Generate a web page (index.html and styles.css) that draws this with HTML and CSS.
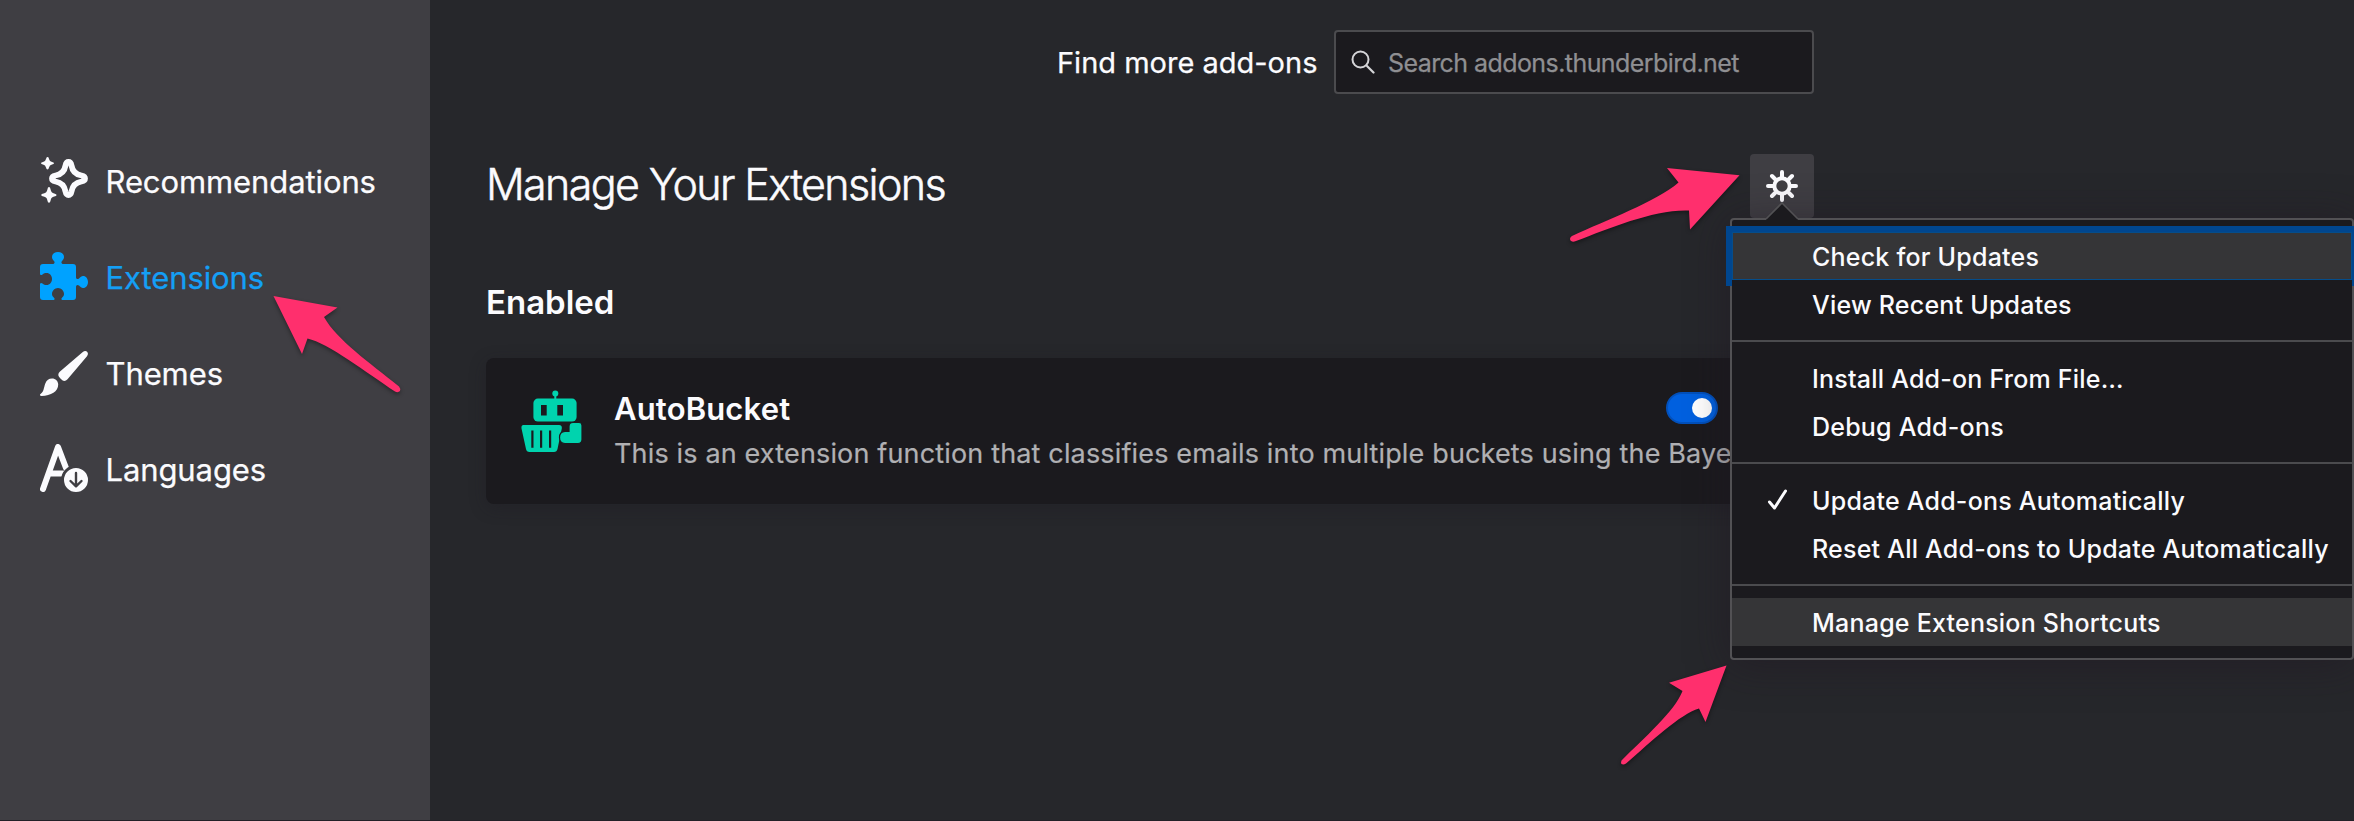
FILE: index.html
```html
<!DOCTYPE html>
<html lang="en">
<head>
<meta charset="utf-8">
<title>Add-ons Manager</title>
<link rel="stylesheet" href="styles.css">
</head>
<body>
<div class="app">
  <nav class="sidebar">
    <a class="category">
      <svg class="category-icon" viewBox="0 0 48 48"><path d="M28.5 6C26.8 6 26 7 25.5 9.500C24.500 15.500 21.500 18.500 15.500 19.500C13 20 12 20.800 12 22.500S13 25 15.500 25.500C21.500 26.500 24.500 29.500 25.500 35.500C26 38 26.800 39 28.500 39S31 38 31.500 35.500C32.500 29.500 35.500 26.500 41.500 25.500C44 25 45 24.200 45 22.500S44 20 41.500 19.500C35.500 18.500 32.500 15.500 31.500 9.500C31 7 30.200 6 28.500 6Z" fill="none" stroke="currentColor" stroke-width="5.800"/><path d="M7.500 1C8.300 1 8.700 1.500 9 3Q9.500 5.500 12 6Q14 6.400 14 7.300T12 8.600Q9.500 9.200 9 11.600Q8.600 13.600 7.500 13.600T6 11.600Q5.500 9.200 3 8.600Q1 8.200 1 7.300T3 6Q5.500 5.500 6 3Q6.400 1 7.500 1ZM9 31Q10.200 31 10.600 33.400Q11.200 36.800 14.200 37.400Q16.600 37.900 16.600 39T14.200 40.600Q11.200 41.200 10.600 44.400Q10.200 46.800 9 46.800T7.400 44.400Q6.800 41.200 3.600 40.600Q1.200 40.200 1.200 39T3.600 37.400Q6.800 36.800 7.400 33.400Q7.800 31 9 31Z" fill="currentColor"/></svg>
      <span class="category-name">Recommendations</span>
    </a>
    <a class="category selected">
      <svg class="category-icon" viewBox="0 0 48 48"><path fill="currentColor" d="M3 12H12.500C14.500 12 15.200 10.500 14 9C12.600 7.600 12 6.400 12 5C12 1.900 14.700 0 18 0S24 1.900 24 5C24 6.400 23.400 7.600 22 9C20.800 10.500 21.500 12 23.500 12H33Q36 12 36 15V25C36 27 37.500 27.700 39 26.500C40.400 24.900 41.600 24 43 24C46.100 24 48 26.700 48 30S46.100 36 43 36C41.600 36 40.400 35.100 39 33.500C37.500 32.300 36 33 36 35V45Q36 48 33 48H23C21.300 48 21 46.700 22 45.700C23.400 44.500 24 43.500 24 42C24 38.800 21.300 36 18 36S12 38.800 12 42C12 43.500 12.600 44.500 14 45.700C15 46.700 14.700 48 13 48H3Q0 48 0 45V32.500C0 30.800 1.300 30.500 2.500 31.500C3.800 32.700 5 33 6.500 33C9.800 33 12 30.300 12 27S9.800 21 6.500 21C5 21 3.800 21.300 2.500 22.500C1.300 23.500 0 23.200 0 21.500V15Q0 12 3 12Z"/></svg>
      <span class="category-name">Extensions</span>
    </a>
    <a class="category">
      <svg class="category-icon" viewBox="0 0 48 48"><path fill="currentColor" d="M42.500 4.200Q45.500 1.800 47.300 4Q48.800 6 46.800 8.500L27.500 31.200Q25 34 22.300 32.200Q20 30.700 18.700 28.300Q17.500 25.800 20 23.600ZM12 30.500C15.500 30.500 18.200 33 18.200 36.600C18.200 43.500 11 48 1.500 48Q-1 47.500 .5 46C4 43.500 3.500 40.500 5.300 35.500C6.500 32.300 9 30.500 12 30.500Z"/></svg>
      <span class="category-name">Themes</span>
    </a>
    <a class="category">
      <svg class="category-icon" viewBox="0 0 48 48"><path d="M3 45L18 3L26 24M9.500 29.500H23" fill="none" stroke="currentColor" stroke-width="6" stroke-linecap="round" stroke-linejoin="round"/><circle cx="36" cy="36" r="13.500" fill="currentColor" stroke="#3f3e43" stroke-width="3"/><path d="M36 29V42M30.500 37L36 42.300L41.500 37" fill="none" stroke="#3f3e43" stroke-width="2.400" stroke-linecap="round" stroke-linejoin="round"/></svg>
      <span class="category-name">Languages</span>
    </a>
  </nav>

  <main class="main">
    <div class="search-row">
      <label class="search-label">Find more add-ons</label>
      <div class="search-box">
        <svg class="search-icon" viewBox="0 0 24 24"><circle cx="9.500" cy="9.500" r="8" fill="none" stroke="currentColor" stroke-width="2"/><path d="M15.500 15.500L22.500 22.500" stroke="currentColor" stroke-width="2.200" stroke-linecap="round"/></svg>
        <span class="search-text">Search addons.thunderbird.net</span>
      </div>
    </div>
    <div class="heading-row">
      <h1 class="heading">Manage Your Extensions</h1>
      <div class="gear-button">
        <svg class="gear-icon" viewBox="0 0 32 32" fill="none" stroke="currentColor" stroke-linecap="round"><circle cx="16" cy="16" r="7.700" stroke-width="4"/><path stroke-width="4" d="M16 2V7M16 25V30M2 16H7M25 16H30M6 6L9 9M23 23L26 26M26 6L23 9M9 23L6 26"/></svg>
        <div class="menu">
          <svg class="menu-arrow" viewBox="0 0 34 18"><path d="M1 17.500L17 1L33 17.500V18H1Z" fill="#1b1a1e"/><path d="M1 17L17 1L33 17" fill="none" stroke="#525154" stroke-width="1.600"/></svg>
          <div class="menu-item focused"><span>Check for Updates</span></div>
          <div class="menu-item cover"><span>View Recent Updates</span></div>
          <div class="separator"></div>
          <div class="menu-item"><span>Install Add-on From File…</span></div>
          <div class="menu-item"><span>Debug Add-ons</span></div>
          <div class="separator"></div>
          <div class="menu-item"><svg class="check" viewBox="0 0 22 22"><path d="M2.500 13L7.500 19L18.500 2" fill="none" stroke="currentColor" stroke-width="3" stroke-linecap="round" stroke-linejoin="round"/></svg><span>Update Add-ons Automatically</span></div>
          <div class="menu-item"><span>Reset All Add-ons to Update Automatically</span></div>
          <div class="separator"></div>
          <div class="menu-item hovered"><span>Manage Extension Shortcuts</span></div>
        </div>
      </div>
    </div>
    <h2 class="section">Enabled</h2>
    <article class="card">
      <svg class="addon-icon" viewBox="0 0 64 64"><g fill="#00d3ae"><circle cx="36.300" cy="3.500" r="3"/><path d="M35.300 5h2v5h-2z"/><rect x="14.400" y="8.600" width="43.200" height="23" rx="4.500"/><path d="M4.500 35H40Q43.300 35 42.800 38.500L38.500 59Q37.800 62 35 62H10.500Q7.500 62 7 59L2.500 38.500Q2 35 4.500 35Z"/><path d="M54 32.500H60Q63 32.500 63 35.500V49.500Q63 53.500 59 53.500H46Q40.500 53.500 40.500 47.500T46 41.300H50V36.500Q50 32.500 54 32.500Z" stroke="#1b1a1e" stroke-width="1.200"/></g><path d="M22 15h5.700v10.500H22zM38.300 15h5.700v10.500h-5.700zM12.300 40.500h2.200v17.300h-2.200zM21 40.500h2.200v17.300h-2.200zM30 40.500h2.200v17.300h-2.200z" fill="#1b1a1e"/></svg>
      <div class="card-body">
        <div class="card-top">
          <h3 class="addon-name">AutoBucket</h3>
          <span class="toggle"><span class="knob"></span></span>
        </div>
        <p class="addon-description">This is an extension function that classifies emails into multiple buckets using the Baye</p>
      </div>
    </article>
  </main>
</div>

<svg class="annotations" viewBox="0 0 2354 821">
  <path d="M273.500 296L337.500 307.500L324 317C337 340 370 363 399 386.500Q401 389 400 391Q398 393 395 391.500C367 373 328 343 307.500 338.500L302 354Z"/>
  <path d="M1739.500 175.300L1667 168L1678.500 182.500C1656 202 1606 220 1572 236Q1569 238 1570.500 240.500Q1572 242.500 1576 241C1610 228 1655 209 1689 210.500L1690 229.500Z"/>
  <path d="M1726.500 665.500L1669 682.700L1682.500 691C1675 711 1644 738 1621.500 760.500Q1620.500 762.500 1621.500 764Q1623.500 765 1626 763.500C1651 742 1680 714 1699 708.500L1705.500 722Z"/>
</svg>
</body>
</html>
```
FILE: styles.css
```css
* { box-sizing: border-box; }
html, body { margin: 0; }
body { width: 2354px; height: 821px; overflow: hidden; background: #26272b; color: #fbfbfe; font-family: Inter, "Liberation Sans", sans-serif; }
h1, h2, h3, p { margin: 0; white-space: nowrap; }
span, label { white-space: nowrap; }
.app { display: flex; width: 2354px; height: 821px; border-bottom: 1px solid #222027; }
.sidebar { width: 430px; flex: none; padding-top: 132px; background: #3f3e43; }
.category { display: flex; align-items: center; gap: 18px; height: 96px; padding-left: 40px; font-size: 31px; letter-spacing: -.1px; -webkit-text-stroke: .25px currentColor; }
.category-name { padding-top: 2px; margin-left: -.5px; }
.category-icon { width: 48px; height: 48px; flex: none; }
.selected { color: #149ff5; }
.selected .category-icon { color: #00a2ff; }
.main { flex: 1; padding: 30px 0 0 56px; }
.search-row { display: flex; align-items: center; justify-content: flex-end; width: 1328px; height: 64px; }
.search-label { width: 277px; padding-top: 1px; font-size: 29px; -webkit-text-stroke: .25px currentColor; }
.search-box { display: flex; align-items: center; width: 480px; height: 64px; padding-left: 15px; border: 2px solid #4b4b4e; border-radius: 4px; background: #1b1a1e; }
.search-icon { width: 24px; height: 24px; margin-right: 13px; color: #d5d5d8; }
.search-text { padding-top: 1px; font-size: 25px; letter-spacing: -.57px; color: #8f8f92; -webkit-text-stroke: .25px currentColor; }
.heading-row { display: flex; align-items: center; justify-content: space-between; width: 1328px; height: 64px; margin-top: 60px; }
.heading { height: 64px; font-size: 43px; font-weight: 300; letter-spacing: -1.63px; line-height: 60px; -webkit-text-stroke: .5px currentColor; }
.gear-button { position: relative; width: 64px; height: 64px; padding: 16px; border-radius: 4px; background: #3f3e43; }
.gear-icon { display: block; width: 32px; height: 32px; }
.section { height: 40px; margin-top: 64px; font-size: 33px; font-weight: 600; line-height: 40px; }
.card { display: flex; width: 1328px; height: 146px; margin-top: 36px; padding: 32px 32px 0 33px; border-radius: 8px; background: #1b1a1e; box-shadow: 0 4px 16px rgba(30, 25, 35, .35); }
.addon-icon { width: 64px; height: 64px; margin-right: 31px; flex: none; }
.card-top { display: flex; align-items: center; justify-content: space-between; width: 1104px; height: 36px; }
.addon-name { font-size: 31px; font-weight: 600; letter-spacing: .15px; }
.toggle { display: flex; justify-content: flex-end; width: 52px; height: 32px; padding: 4px; border: 2px solid #0250bb; border-radius: 16px; background: #0060df; }
.knob { width: 20px; height: 20px; border-radius: 50%; background: #fff; }
.addon-description { margin-top: 8px; font-size: 27px; line-height: 40px; letter-spacing: .155px; color: #b0b0b3; -webkit-text-stroke: .2px currentColor; }
.menu { position: absolute; left: -20px; top: 64px; z-index: 2; width: 624px; height: 442px; padding: 12px 0; border: 2px solid #525154; border-radius: 4px; background: #1b1a1e; box-shadow: 0 4px 40px rgba(32, 22, 34, .5); -webkit-text-stroke: 0; }
.menu-arrow { position: absolute; left: 33px; top: -18px; width: 34px; height: 18px; }
.menu-item { position: relative; display: flex; align-items: center; height: 48px; padding: 2px 0 0 80px; font-size: 25px; font-weight: 500; letter-spacing: .22px; }
.focused { background: #353537; border: 1px solid #054d8a; padding-left: 79px; box-shadow: 0 0 0 6px #00468f; }
.cover { background: #1b1a1e; }
.hovered { background: #353537; }
.separator { height: 2px; margin: 12px 0; background: #4b4b4e; }
.check { position: absolute; left: 35px; top: 13px; width: 22px; height: 22px; }
.annotations { position: absolute; left: 0; top: 0; width: 2354px; height: 821px; pointer-events: none; fill: #ff2f6d; filter: drop-shadow(0 2px 2px rgba(0, 0, 0, .4)); z-index: 3; }
```
